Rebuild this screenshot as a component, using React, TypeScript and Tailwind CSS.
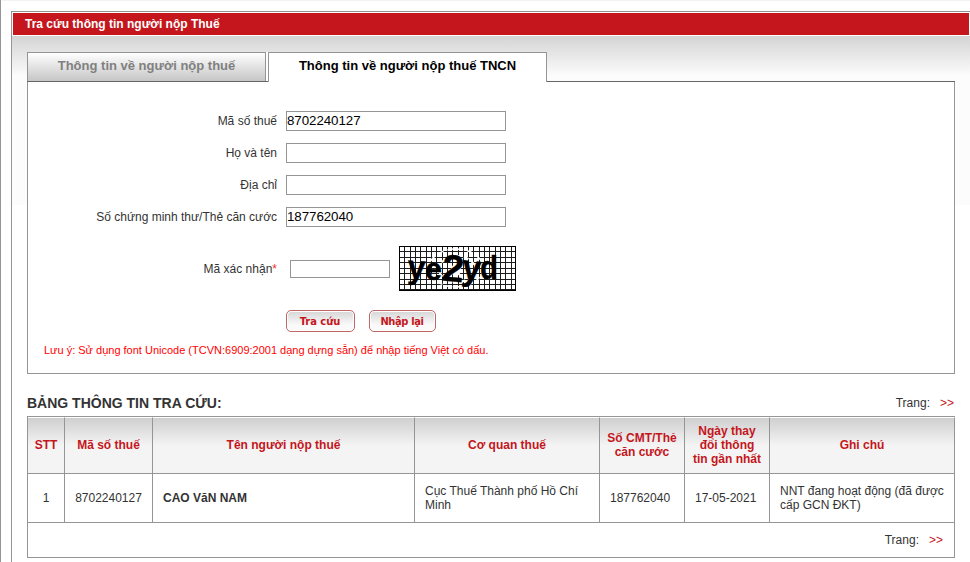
import type { ReactNode } from "react";

function Field({ label, value }: { label: string; value?: string }) {
  return (
    <div className="flex h-5 items-center">
      <label className="w-[249px] text-right text-[12px] leading-5">{label}</label>
      <input
        defaultValue={value}
        className="ml-[9px] h-5 w-[220px] border border-[#959595] bg-white pb-px text-[13.333px] leading-4 tracking-[-0.06px] text-black outline-none"
      />
    </div>
  );
}

function RedButton({ children, className }: { children: ReactNode; className: string }) {
  return (
    <button
      className={`h-[22px] rounded-[5px] border border-[#bf6668] bg-linear-to-b from-[#d6d6d6] to-[#fafafa] to-70% pt-px pr-px text-center font-['DejaVu_Sans_Condensed','DejaVu_Sans',sans-serif] text-[11px] leading-[18px] font-bold text-[#c4161c] shadow-[inset_0_0_0_1px_#fff] ${className}`}
    >
      {children}
    </button>
  );
}

function Captcha() {
  const columns = Array.from({ length: 22 }, (_, i) => Math.round(i * 5.32) + 0.5);
  const rows = Array.from({ length: 9 }, (_, i) => Math.round(i * 5.42) + 0.5);
  return (
    <svg width="117" height="45" viewBox="0 0 117 45" className="ml-[9px] block bg-white">
      <g stroke="#1c1c1c" strokeWidth="1">
        {columns.map((x) => (
          <line key={x} x1={x} x2={x} y1="0" y2="45" />
        ))}
        {rows.map((y) => (
          <line key={y} x1="0" x2="117" y1={y} y2={y} />
        ))}
      </g>
      <ellipse cx="57" cy="22" rx="27" ry="19" fill="none" stroke="#fff" strokeWidth="1.5" strokeDasharray="6 4" />
      <ellipse cx="58" cy="23" rx="18" ry="13" fill="none" stroke="#fff" strokeWidth="2" strokeDasharray="5 3" />
      <ellipse cx="57" cy="24" rx="5" ry="6" fill="#fff" />
      <rect x="0.5" y="0.5" width="116" height="44" fill="none" stroke="#000" />
      <g fontFamily="'Liberation Sans', sans-serif" fontWeight="bold" fill="#000" stroke="#000" strokeWidth="0.3">
        <text transform="translate(8 32) rotate(3)" fontSize="33" textLength="18" lengthAdjust="spacingAndGlyphs">y</text>
        <text transform="translate(26 33.5)" fontSize="32" textLength="17" lengthAdjust="spacingAndGlyphs">e</text>
        <text transform="translate(42 34.5) rotate(5)" fontSize="38" textLength="22" lengthAdjust="spacingAndGlyphs">2</text>
        <text transform="translate(62 33) rotate(6)" fontSize="36" textLength="19" lengthAdjust="spacingAndGlyphs">y</text>
        <text transform="translate(81 33)" fontSize="34" textLength="18" lengthAdjust="spacingAndGlyphs">d</text>
      </g>
    </svg>
  );
}

function HeadCell({ children }: { children?: ReactNode }) {
  return (
    <div className="flex items-center justify-center border-r border-b border-[#959595] border-t border-t-white bg-linear-to-b from-[#cfcfcf] to-[#f4f4f4] to-50% pb-[2px] text-center text-[12px] leading-[14px] font-bold whitespace-nowrap text-[#c4161c]">
      <span>{children}</span>
    </div>
  );
}

function Cell({ children, className = "" }: { children?: ReactNode; className?: string }) {
  return (
    <div className={`flex items-center border-r border-b border-[#959595] text-[12px] leading-[14px] whitespace-nowrap ${className}`}>
      <span>{children}</span>
    </div>
  );
}

export default function App() {
  return (
    <div className="h-[562px] w-[970px] overflow-hidden border-l border-[#959595] bg-white font-['Liberation_Sans',Arial,sans-serif] text-[#333]">
      <div className="ml-px h-px bg-[#f2f2f2]" />
      <div className="mt-[10px] ml-[10px] h-[560px] border-t border-l border-[#959595]">
        <div className="mt-px mr-px ml-px h-[22px] bg-[#c4161c] pl-3 text-[12px] leading-[22px] font-bold text-white">
          Tra cứu thông tin người nộp Thuế
        </div>
        <div className="mt-px h-[169px] bg-linear-to-b from-[#d4d4d4] to-[#fcfcfc] to-[40px] pt-4 pl-[15px]">
          <div className="relative flex h-[30px] w-[928px] items-start border-b border-[#666]">
            <div className="h-[29px] w-[239px] border border-b-0 border-[#959595] bg-linear-to-b from-white to-[#c6c6c6] text-center text-[13px] leading-[26px] font-bold text-[#808080]">
              Thông tin về người nộp thuế
            </div>
            <div className="h-[29px] w-[2px] bg-white" />
            <div className="h-[30px] w-[279px] border border-b-0 border-[#959595] bg-white text-center text-[13px] leading-[26px] font-bold text-black">
              Thông tin về người nộp thuế TNCN
            </div>
          </div>

          <div className="h-[292px] w-[928px] border border-t-0 border-[#959595] bg-white pt-[29px]">
            <div className="flex flex-col gap-3">
              <Field label="Mã số thuế" value="8702240127" />
              <Field label="Họ và tên" />
              <Field label="Địa chỉ" />
              <Field label="Số chứng minh thư/Thẻ căn cước" value="187762040" />
            </div>
            <div className="mt-[19px] flex h-[45px] items-center">
              <label className="w-[249px] text-right text-[12px] leading-5">
                Mã xác nhận<span className="text-[#f03030]">*</span>
              </label>
              <input className="ml-[13px] h-[18px] w-[100px] border border-[#959595] bg-white outline-none" />
              <Captcha />
            </div>
            <div className="mt-[19px] flex gap-[14px] pl-[258px]">
              <RedButton className="w-[69px]">Tra cứu</RedButton>
              <RedButton className="w-[67px] tracking-[-0.35px]">Nhập lại</RedButton>
            </div>
            <p className="mt-[10px] ml-4 text-[11px] leading-4 whitespace-nowrap text-[#f00]">
              Lưu ý: Sử dụng font Unicode (TCVN:6909:2001 dạng dựng sẵn) để nhập tiếng Việt có dấu.
            </p>
          </div>

          <div className="mt-[20px] flex h-[22px] w-[928px] items-start justify-between">
            <h2 className="text-[14px] leading-[18px] font-bold">BẢNG THÔNG TIN TRA CỨU:</h2>
            <div className="flex gap-[10px] pr-px text-[12px] leading-[18px]">
              <span>Trang:</span>
              <a className="text-[#c4161c]">&gt;&gt;</a>
            </div>
          </div>

          <div className="grid h-[142px] w-[928px] grid-cols-[37px_88px_262px_185px_85px_85px_185px] grid-rows-[57px_49px_35px] border-t border-l border-[#959595] bg-white">
            <HeadCell>STT</HeadCell>
            <HeadCell>Mã số thuế</HeadCell>
            <HeadCell>Tên người nộp thuế</HeadCell>
            <HeadCell>Cơ quan thuế</HeadCell>
            <HeadCell>Số CMT/Thẻ<br />căn cước</HeadCell>
            <HeadCell>Ngày thay<br />đổi thông<br />tin gần nhất</HeadCell>
            <HeadCell>Ghi chú</HeadCell>
            <Cell className="justify-center">1</Cell>
            <Cell className="justify-center">8702240127</Cell>
            <Cell className="pl-[10px] font-bold">CAO VăN NAM</Cell>
            <Cell className="pl-[10px]">Cục Thuế Thành phố Hồ Chí<br />Minh</Cell>
            <Cell className="pl-[10px]">187762040</Cell>
            <Cell className="pl-[10px]">17-05-2021</Cell>
            <Cell className="pl-[10px]">NNT đang hoạt động (đã được<br />cấp GCN ĐKT)</Cell>
            <div className="col-span-7 flex items-center justify-end gap-[10px] border-r border-b border-[#959595] pr-[11px] text-[12px] leading-4">
              <span>Trang:</span>
              <a className="text-[#c4161c]">&gt;&gt;</a>
            </div>
          </div>
        </div>
      </div>
    </div>
  );
}
